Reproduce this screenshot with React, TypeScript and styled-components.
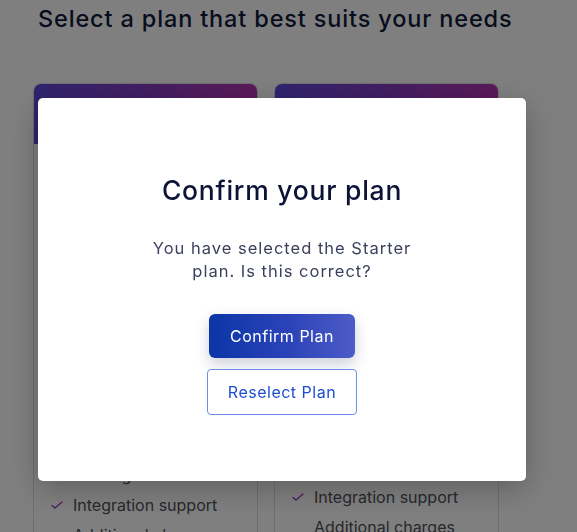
import React from "react";
import styled, { createGlobalStyle } from "styled-components";

const Global = createGlobalStyle`
  html, body { margin: 0; padding: 0; background: #ffffff; }
  body { font-family: "Inter", "Noto Sans", sans-serif; overflow: hidden; }
  * { box-sizing: border-box; }
`;

const Page = styled.div`
  padding: 0 0 0 33px;
  width: 577px;
  height: 532px;
  overflow: hidden;
`;

const Heading = styled.h1`
  margin: 4px 0 0 5px;
  font-size: 23.5px;
  font-weight: 500;
  color: #101a3c;
  letter-spacing: 0.85px;
  line-height: 30px;
  white-space: nowrap;
`;

const Cards = styled.div`
  display: flex;
  gap: 16px;
  margin-top: 49px;
`;

const Card = styled.div`
  width: 225px;
  border: 1px solid #dcdde3;
  border-radius: 8px;
  overflow: hidden;
  background: #ffffff;
  flex-shrink: 0;
`;

const CardHeader = styled.div`
  height: 60px;
  background: linear-gradient(100deg, #5f47de 0%, #8a3cc4 50%, #bb34b2 100%);
  color: #fff;
  display: flex;
  align-items: center;
  padding: 0 18px;
  font-size: 18px;
  font-weight: 600;
`;

const CardBody = styled.div<{ $intro: number }>`
  padding: 0 17px 24px;
  & > div:first-child { height: ${(p) => p.$intro}px; }
`;

const Intro = styled.div`
  padding-top: 16px;
  color: #333;
  font-size: 14px;
`;

const Features = styled.ul`
  list-style: none;
  margin: 0;
  padding: 0;
`;

const Feature = styled.li`
  display: flex;
  align-items: center;
  gap: 10px;
  height: 30px;
  font-size: 16px;
  letter-spacing: 0;
  color: #505258;
  white-space: nowrap;
`;

const Plain = styled.span`
  padding-left: 22px;
`;

const Check = () => (
  <svg width="12" height="10" viewBox="0 0 12 10" fill="none">
    <defs>
      <linearGradient id="ck" x1="0" y1="0" x2="1" y2="0">
        <stop offset="0" stopColor="#5a45d8" />
        <stop offset="1" stopColor="#b435ae" />
      </linearGradient>
    </defs>
    <path d="M1 5.5 L4 8 L11 2" stroke="url(#ck)" strokeWidth="1.3" strokeLinecap="round" strokeLinejoin="round" />
  </svg>
);

const Overlay = styled.div`
  position: fixed;
  inset: 0;
  background: rgba(0, 0, 0, 0.5);
  display: flex;
  align-items: flex-start;
  padding: 98px 0 0 38px;
`;

const Modal = styled.div`
  width: 488px;
  height: 383px;
  background: #ffffff;
  border-radius: 5px;
  box-shadow: 0 8px 30px rgba(0, 0, 0, 0.25);
  display: flex;
  flex-direction: column;
  align-items: center;
  padding-top: 75px;
`;

const Title = styled.h2`
  margin: 0;
  font-size: 26.5px;
  font-weight: 500;
  color: #0b1437;
  line-height: 34px;
  letter-spacing: 0.75px;
`;

const Message = styled.p`
  margin: 30px 0 0;
  width: 280px;
  text-align: center;
  font-size: 16.5px;
  line-height: 23px;
  letter-spacing: 1px;
  color: #3a3f5c;
`;

const Actions = styled.div`
  display: flex;
  flex-direction: column;
  align-items: center;
  gap: 11px;
  margin-top: 31px;
`;

const Button = styled.button<{ $variant: "primary" | "outline" }>`
  font-family: inherit;
  font-size: 16px;
  letter-spacing: 0.5px;
  cursor: pointer;
  ${(p) =>
    p.$variant === "primary"
      ? `
    width: 146px;
    height: 44px;
    border: none;
    border-radius: 6px;
    color: #ffffff;
    background: linear-gradient(90deg, #0a36a8 0%, #2c43b8 55%, #4d5cc7 100%);
    box-shadow: 0 6px 14px rgba(30, 40, 90, 0.22);
  `
      : `
    width: 150px;
    height: 46px;
    border: 1px solid #6a8fe6;
    border-radius: 4px;
    color: #1d4fd1;
    background: #ffffff;
  `}
`;

export default function App() {
  return (
    <>
      <Global />
      <Page>
        <Heading>Select a plan that best suits your needs</Heading>
        <Cards>
          <Card>
            <CardHeader>Starter</CardHeader>
            <CardBody $intro={136}>
              <Intro>$29 / month</Intro>
              <Features>
                <Feature><Check />Single user</Feature>
                <Feature><Check />5 projects</Feature>
                <Feature><Check />Basic analytics</Feature>
                <Feature><Check />Email support</Feature>
                <Feature><Check />10 GB storage</Feature>
                <Feature><Check />Standard API</Feature>
                <Feature><Check />Hosting 50 models</Feature>
                <Feature><Check />Integration support</Feature>
                <Feature><Plain>Additional charges</Plain></Feature>
              </Features>
            </CardBody>
          </Card>
          <Card>
            <CardHeader>Professional</CardHeader>
            <CardBody $intro={128}>
              <Intro>$79 / month</Intro>
              <Features>
                <Feature><Check />Up to 5 users</Feature>
                <Feature><Check />Unlimited projects</Feature>
                <Feature><Check />Advanced analytics</Feature>
                <Feature><Check />Priority support</Feature>
                <Feature><Check />100 GB storage</Feature>
                <Feature><Check />Extended API</Feature>
                <Feature><Check />Hosting 200 models</Feature>
                <Feature><Check />Integration support</Feature>
                <Feature><Plain>Additional charges</Plain></Feature>
              </Features>
            </CardBody>
          </Card>
        </Cards>
      </Page>
      <Overlay>
        <Modal role="dialog" aria-modal="true">
          <Title>Confirm your plan</Title>
          <Message>You have selected the Starter plan. Is this correct?</Message>
          <Actions>
            <Button $variant="primary">Confirm Plan</Button>
            <Button $variant="outline">Reselect Plan</Button>
          </Actions>
        </Modal>
      </Overlay>
    </>
  );
}
